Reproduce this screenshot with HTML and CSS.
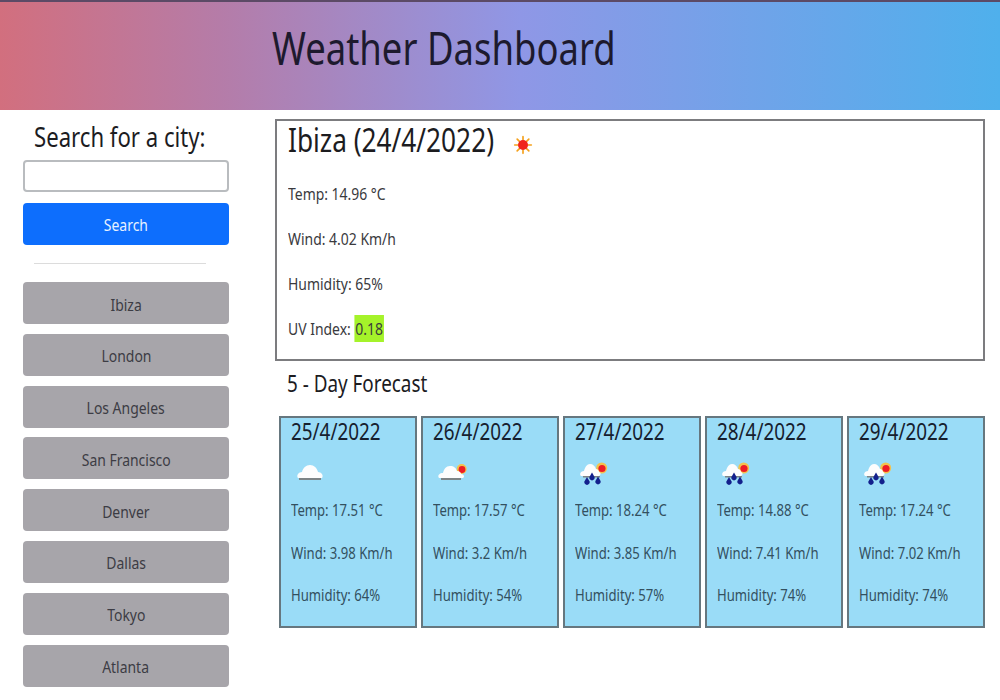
FILE: index.html
```html
<!DOCTYPE html>
<html lang="en">
<head>
  <meta charset="UTF-8">
  <meta name="viewport" content="width=device-width, initial-scale=1.0">
  <title>Weather Dashboard</title>
  <link rel="stylesheet" href="styles.css">
</head>
<body>
  <!-- Icon definitions -->
  <svg class="icon-defs" width="0" height="0">
    <symbol id="icon-sun" viewBox="0 0 24 24">
      <g stroke="#f5a11c" stroke-width="2" stroke-linecap="round">
        <path d="M12 2v4M12 18v4M2 12h4M18 12h4M5 5l3 3M16 16l3 3M5 19l3-3M16 8l3-3"/>
      </g>
      <circle cx="12" cy="12" r="6" fill="#f0251c"/>
    </symbol>
    <symbol id="icon-cloud" viewBox="0 0 32 26">
      <path d="M4 18c-2-3 1-6 4-6 1-4 4-7 8-7 4 0 7 3 8 7 3 0 6 3 4 6z" fill="#fdfdfd"/>
      <rect x="5" y="18" width="22" height="2" fill="#7d8486"/>
    </symbol>
    <symbol id="icon-cloud-sun" viewBox="0 0 32 26">
      <circle cx="25.7" cy="9" r="5" fill="#f3c24d"/>
      <circle cx="26" cy="9.5" r="3.4" fill="#ee1c25"/>
      <path d="M3 18c-2-3 1-5 4-5 1-4 3-7 7-7 4 0 6 2 7 5 3 0 4 2 4 3 3 0 4 3 2 4z" fill="#fdfdfd"/>
      <rect x="5" y="18" width="20" height="2" fill="#7d8486"/>
    </symbol>
    <symbol id="icon-rain" viewBox="0 0 32 26">
      <circle cx="23.7" cy="8" r="5.5" fill="#f3c24d"/>
      <circle cx="24" cy="8.5" r="3.6" fill="#ee1c25"/>
      <path d="M3 16c-2-2 0-5 3-5 1-4 3-7 6-7 3 0 5 2 6 5 2 0 3 2 3 3 2 0 2 3 0 4z" fill="#fdfdfd"/>
      <rect x="5" y="16" width="17" height="1.5" fill="#7d8486"/>
      <g fill="#13208c">
        <path d="M9 17l2.6 4.5a2.7 2.7 0 1 1-5.2 0z"/>
        <path d="M14 12.5l2.6 4.5a2.7 2.7 0 1 1-5.2 0z"/>
        <path d="M20 16.5l2.6 4.5a2.7 2.7 0 1 1-5.2 0z"/>
      </g>
    </symbol>
  </svg>

  <header class="page-header">
    <h1>Weather Dashboard</h1>
  </header>

  <div class="page-body">
    <aside class="sidebar">
      <h2 class="search-title">Search for a city:</h2>
      <input class="search-input" type="text">
      <button class="search-button"><span>Search</span></button>
      <hr class="divider">
      <div class="history">
        <button class="city-button"><span>Ibiza</span></button>
        <button class="city-button"><span>London</span></button>
        <button class="city-button"><span>Los Angeles</span></button>
        <button class="city-button"><span>San Francisco</span></button>
        <button class="city-button"><span>Denver</span></button>
        <button class="city-button"><span>Dallas</span></button>
        <button class="city-button"><span>Tokyo</span></button>
        <button class="city-button"><span>Atlanta</span></button>
      </div>
    </aside>

    <main class="content">
      <section class="current">
        <div class="current-title">
          <h2>Ibiza (24/4/2022)</h2>
          <svg class="current-icon"><use href="#icon-sun"/></svg>
        </div>
        <p>Temp: 14.96 °C</p>
        <p>Wind: 4.02 Km/h</p>
        <p>Humidity: 65%</p>
        <p>UV Index: <span class="uv-low">0.18</span></p>
      </section>

      <h3 class="forecast-title">5 - Day Forecast</h3>

      <section class="forecast">
        <article class="day-card">
          <h4>25/4/2022</h4>
          <svg class="day-icon"><use href="#icon-cloud"/></svg>
          <p>Temp: 17.51 °C</p>
          <p>Wind: 3.98 Km/h</p>
          <p>Humidity: 64%</p>
        </article>
        <article class="day-card">
          <h4>26/4/2022</h4>
          <svg class="day-icon"><use href="#icon-cloud-sun"/></svg>
          <p>Temp: 17.57 °C</p>
          <p>Wind: 3.2 Km/h</p>
          <p>Humidity: 54%</p>
        </article>
        <article class="day-card">
          <h4>27/4/2022</h4>
          <svg class="day-icon"><use href="#icon-rain"/></svg>
          <p>Temp: 18.24 °C</p>
          <p>Wind: 3.85 Km/h</p>
          <p>Humidity: 57%</p>
        </article>
        <article class="day-card">
          <h4>28/4/2022</h4>
          <svg class="day-icon"><use href="#icon-rain"/></svg>
          <p>Temp: 14.88 °C</p>
          <p>Wind: 7.41 Km/h</p>
          <p>Humidity: 74%</p>
        </article>
        <article class="day-card">
          <h4>29/4/2022</h4>
          <svg class="day-icon"><use href="#icon-rain"/></svg>
          <p>Temp: 17.24 °C</p>
          <p>Wind: 7.02 Km/h</p>
          <p>Humidity: 74%</p>
        </article>
      </section>
    </main>
  </div>
</body>
</html>
```

FILE: styles.css
```css
/* General Styles */
body {
  font-family: "Noto Sans", "Open Sans", sans-serif;
  margin: 0;
  padding: 0;
  background-color: #fff;
  color: #3a3a3e;
  font-size: 17px;
}

h1, h2, h3, h4, p {
  margin: 0;
  font-weight: 400;
  white-space: nowrap;
  /* the text in the screenshot is squeezed horizontally */
  transform: scaleX(0.82);
  transform-origin: left center;
}

button span {
  display: inline-block;
  padding-top: 2px;
  transform: scaleX(0.82);
}

.icon-defs {
  display: block;
}

/* Header */
.page-header {
  height: 108px;
  border-top: 2px solid #5c4a66;
  background: linear-gradient(90deg, #d26f7e 0%, #b57ca8 22%, #8f97e6 52%, #4fb0ec 100%);
  padding-left: 272px;
}

.page-header h1 {
  font-size: 45px;
  line-height: 92px;
  color: #1d1a2e;
  transform: scaleX(0.81);
}

/* Sidebar */
.page-body {
  display: flex;
}

.sidebar {
  width: 206px;
  margin-left: 23px;
  display: flex;
  flex-direction: column;
}

.search-title {
  font-size: 27px;
  line-height: 34px;
  margin: 10px 0 6px 11px;
  color: #1c1c1f;
}

.search-input {
  height: 32px;
  box-sizing: border-box;
  border: 2px solid #b9bcbf;
  border-radius: 4px;
  background: #fff;
}

.search-button {
  height: 42px;
  margin-top: 11px;
  border: none;
  border-radius: 4px;
  background-color: #0d6efd;
  color: #e8f1ff;
  font: inherit;
}

.search-button span {
  padding-top: 0;
}

.divider {
  width: 172px;
  margin: 18px 0 18px 11px;
  border: none;
  border-top: 1px solid #dcdcdc;
}

.history {
  display: flex;
  flex-direction: column;
  gap: 9.8px;
}

.city-button {
  height: 42px;
  border: none;
  border-radius: 4px;
  background-color: #a7a5aa;
  color: #3c3c44;
  font: inherit;
}

/* Current weather */
.content {
  width: 710px;
  margin-left: 46px;
  padding-top: 9px;
}

.current {
  height: 242px;
  box-sizing: border-box;
  border: 2px solid #7c7c7f;
  padding: 0 11px;
}

.current-title {
  display: flex;
  align-items: center;
  height: 37px;
  margin-bottom: 24px;
}

.current-title h2 {
  font-size: 32px;
  color: #1c1c1f;
}

.current-icon {
  width: 20px;
  height: 20px;
  margin-left: -26px;
  margin-top: 10px;
}

.current p {
  line-height: 24px;
  margin-bottom: 21px;
}

.uv-low {
  background-color: #a5f32a;
  padding: 2px 1px;
}

/* Forecast */
.forecast-title {
  font-size: 23px;
  line-height: 28px;
  margin: 8px 0 19px 12px;
  color: #1c1c1f;
}

.forecast {
  display: flex;
  gap: 4px;
  margin-left: 4px;
}

.day-card {
  width: 138px;
  height: 212px;
  box-sizing: border-box;
  border: 2px solid #66777f;
  background-color: #9adcf7;
  padding: 0 10px;
  color: #33505f;
}

.day-card h4 {
  font-size: 23px;
  line-height: 26px;
  color: #16202e;
}

.day-icon {
  display: block;
  width: 32px;
  height: 26px;
  margin: 16px 0 13px 3px;
}

.day-card p {
  font-size: 16px;
  line-height: 22px;
  margin-bottom: 20.5px;
}
```
